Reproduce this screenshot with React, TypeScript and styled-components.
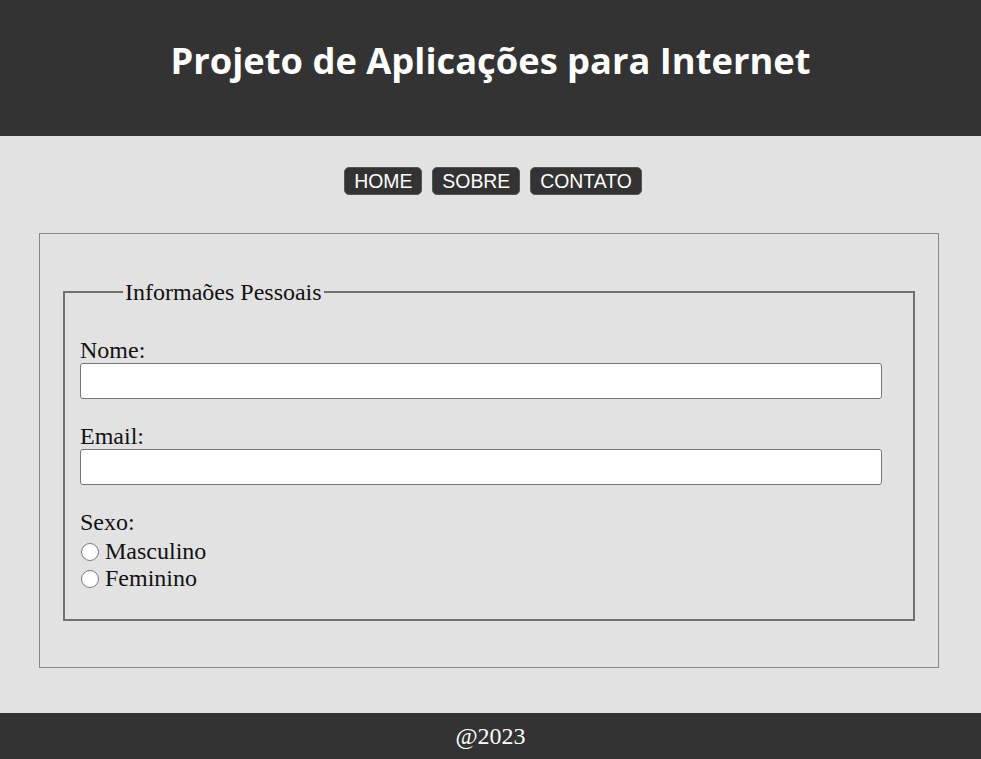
import React from "react";
import styled, { createGlobalStyle } from "styled-components";

const GlobalStyle = createGlobalStyle`
  html, body { margin: 0; padding: 0; }
  body {
    background: #e2e2e2;
    font-family: "Liberation Serif", "Times New Roman", serif;
  }
`;

const Header = styled.header`
  background: #333333;
  height: 136px;
  display: flex;
  align-items: center;
  justify-content: center;
`;

const Title = styled.h1`
  margin: 0 0 16px;
  color: #ffffff;
  font-family: "Open Sans", "Noto Sans", sans-serif;
  font-weight: 700;
  font-size: 36.3px;
`;

const Nav = styled.nav`
  display: flex;
  justify-content: center;
  gap: 10px;
  padding: 31px 0 38px 5px;
`;

const NavButton = styled.a`
  display: block;
  background: #333333;
  color: #ffffff;
  font-family: "Liberation Sans", Arial, sans-serif;
  font-size: 19.4px;
  line-height: 26px;
  padding: 0 9px;
  border: 1px solid #555555;
  border-radius: 5px;
  text-decoration: none;
`;

const Main = styled.main`
  width: 900px;
  box-sizing: border-box;
  margin: 0 0 45px 39px;
  border: 1px solid #888888;
  padding: 45px 23px 46px;
`;

const Fieldset = styled.fieldset`
  margin: 0;
  border: 2px solid #707070;
  padding: 19px 30px 27px 15px;
  font-size: 24px;
`;

const Legend = styled.legend`
  margin-left: 43px;
  padding: 0 2px;
  font-size: 24px;
  line-height: 26px;
  color: #111;
`;

const Field = styled.div`
  display: flex;
  flex-direction: column;
  align-items: flex-start;
  margin-top: 13px;
  & + & { margin-top: 24px; }
`;

const Label = styled.label`
  font-size: 24px;
  line-height: 26px;
  color: #111;
`;

const TextInput = styled.input`
  width: 802px;
  height: 36px;
  box-sizing: border-box;
  margin: 0;
  border: 1px solid #767676;
  border-radius: 3px;
  background: #fff;
  font-size: 16px;
`;

const RadioGroup = styled.div`
  display: flex;
  flex-direction: column;
  margin-top: 3px;
`;

const RadioRow = styled.label`
  display: flex;
  align-items: center;
  height: 27px;
  line-height: 27px;
  font-size: 24px;
  color: #111;
`;

const Radio = styled.input`
  width: 18px;
  height: 18px;
  margin: 0 6px 0 1px;
`;

const Footer = styled.footer`
  background: #333333;
  color: #ffffff;
  text-align: center;
  font-size: 24px;
  line-height: 46px;
`;

export default function App() {
  return (
    <>
      <GlobalStyle />
      <Header>
        <Title>Projeto de Aplicações para Internet</Title>
      </Header>
      <Nav>
        <NavButton href="#">HOME</NavButton>
        <NavButton href="#">SOBRE</NavButton>
        <NavButton href="#">CONTATO</NavButton>
      </Nav>
      <Main>
        <Fieldset>
          <Legend>Informaões Pessoais</Legend>
          <Field>
            <Label htmlFor="nome">Nome:</Label>
            <TextInput id="nome" type="text" />
          </Field>
          <Field>
            <Label htmlFor="email">Email:</Label>
            <TextInput id="email" type="text" />
          </Field>
          <Field>
            <Label>Sexo:</Label>
            <RadioGroup>
              <RadioRow>
                <Radio type="radio" name="sexo" />
                Masculino
              </RadioRow>
              <RadioRow>
                <Radio type="radio" name="sexo" />
                Feminino
              </RadioRow>
            </RadioGroup>
          </Field>
        </Fieldset>
      </Main>
      <Footer>@2023</Footer>
    </>
  );
}
